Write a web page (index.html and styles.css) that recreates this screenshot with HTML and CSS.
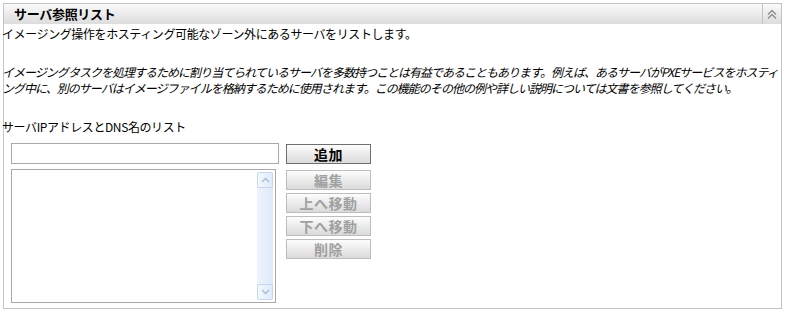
FILE: index.html
```html
<!DOCTYPE html>
<html lang="ja">
<head>
    <meta charset="UTF-8">
    <title>サーバ参照リスト</title>
    <link rel="stylesheet" href="styles.css">
</head>
<body>
    <div class="panel">
        <div class="panel-head">
            <span class="title">サーバ参照リスト</span>
            <span class="toggle">
                <svg width="12" height="11" viewBox="0 0 12 11">
                    <path d="M2 5.5 L6 1.5 L10 5.5 M2 9.5 L6 5.5 L10 9.5" fill="none" stroke="#8a8a8a" stroke-width="1.3"/>
                </svg>
            </span>
        </div>
        <div class="panel-body">
            <p class="desc">イメージング操作をホスティング可能なゾーン外にあるサーバをリストします。</p>
            <p class="desc note">イメージングタスクを処理するために割り当てられているサーバを多数持つことは有益であることもあります。例えば、あるサーバがPXEサービスをホスティ<br>ング中に、別のサーバはイメージファイルを格納するために使用されます。この機能のその他の例や詳しい説明については文書を参照してください。</p>
            <p class="desc field-label">サーバIPアドレスとDNS名のリスト</p>

            <div class="editor">
                <div class="editor-row">
                    <input type="text" class="server-input">
                    <button class="btn add-btn">追加</button>
                </div>
                <div class="editor-row">
                    <div class="listbox">
                        <div class="list-items"></div>
                        <div class="scrollbar">
                            <span class="scroll-btn">
                                <svg width="9" height="6" viewBox="0 0 9 6"><path d="M1 5 L4.5 1.5 L8 5" fill="none" stroke="#a9bcd6" stroke-width="1.4"/></svg>
                            </span>
                            <span class="scroll-btn">
                                <svg width="9" height="6" viewBox="0 0 9 6"><path d="M1 1 L4.5 4.5 L8 1" fill="none" stroke="#a9bcd6" stroke-width="1.4"/></svg>
                            </span>
                        </div>
                    </div>
                    <div class="btn-col">
                        <button class="btn" disabled>編集</button>
                        <button class="btn" disabled>上へ移動</button>
                        <button class="btn" disabled>下へ移動</button>
                        <button class="btn" disabled>削除</button>
                    </div>
                </div>
            </div>
        </div>
    </div>
</body>
</html>
```

FILE: styles.css
```css
body {
    margin: 0;
    background: #fff;
    font-family: "Noto Sans CJK JP", "Liberation Sans", sans-serif;
    font-size: 12px;
    color: #000;
}
.panel {
    width: 777px;
    margin: 3px 0 0 3px;
    border: 1px solid #c2c2c2;
}
.panel-head {
    display: flex;
    height: 20px;
    background: linear-gradient(#fafafa, #dcdcdc);
}
.title {
    flex: 1;
    padding-left: 10px;
    font-size: 13px;
    font-weight: bold;
    line-height: 20px;
    letter-spacing: -0.3px;
}
.toggle {
    width: 18px;
    border-left: 1px solid #c2c2c2;
    display: flex;
    align-items: center;
    justify-content: center;
}
.panel-body {
    padding-bottom: 5px;
}
.desc {
    margin: 2px 0 22px -2px;
    line-height: 16px;
    letter-spacing: -0.4px;
}
.note {
    margin-top: 0;
    margin-bottom: 23px;
    font-style: italic;
    letter-spacing: -0.98px;
    white-space: nowrap;
}
.field-label {
    margin: 0 0 8px -2px;
}
.editor {
    margin-left: 7px;
    display: flex;
    flex-direction: column;
    gap: 5px;
}
.editor-row {
    display: flex;
    align-items: flex-start;
}
.server-input {
    width: 268px;
    height: 21px;
    box-sizing: border-box;
    margin: 0;
    border: 1px solid #a8a8a8;
    padding: 1px 3px;
}
.btn {
    width: 85px;
    height: 20px;
    box-sizing: border-box;
    margin: 0;
    padding: 0;
    border: 1px solid #bdbdbd;
    background: linear-gradient(#fdfdfd, #dadada);
    font-family: "Noto Sans CJK JP", sans-serif;
    font-size: 14px;
    font-weight: bold;
    line-height: 17px;
    letter-spacing: 0.5px;
    color: #a0a0a0;
}
.add-btn {
    margin: 1px 0 0 7px;
    border-color: #707070;
    color: #000;
}
.listbox {
    width: 265px;
    height: 134px;
    box-sizing: border-box;
    border: 1px solid #a8a8a8;
    display: flex;
    justify-content: flex-end;
    padding: 2px 2px 2px 0;
}
.scrollbar {
    width: 16px;
    display: flex;
    flex-direction: column;
    justify-content: space-between;
    background: linear-gradient(to right, #eef4fd, #dde9fb);
}
.scroll-btn {
    height: 16px;
    box-sizing: border-box;
    border: 1px solid #c7d7ef;
    border-radius: 2px;
    background: linear-gradient(to right, #f4f8fe, #dfeafb);
    display: flex;
    align-items: center;
    justify-content: center;
}
.btn-col {
    margin: 1px 0 0 10px;
    display: flex;
    flex-direction: column;
    gap: 3px;
}
```
